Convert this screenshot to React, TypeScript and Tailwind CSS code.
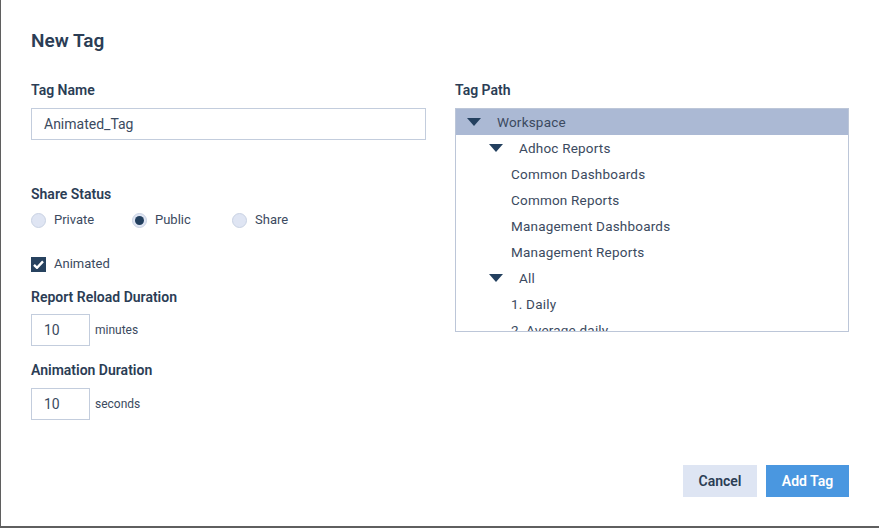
import React from 'react';

const font = { fontFamily: 'Roboto, "Noto Sans", sans-serif' };

const Caret: React.FC = () => (
  <svg width="14" height="8" viewBox="0 0 14 8" className="flex-shrink-0">
    <path d="M0 0h14L7 8z" fill="#23405f" />
  </svg>
);

const Radio: React.FC<{ label: string; checked?: boolean; width: string }> = ({ label, checked, width }) => (
  <label className={`flex items-center ${width}`}>
    <span className="w-[15px] h-[15px] rounded-full border border-[#c9d2e3] bg-[#dfe5f3] flex items-center justify-center">
      {checked && <span className="w-[9px] h-[9px] rounded-full bg-[#23405f]" />}
    </span>
    <span className="ml-2 text-[13px] text-[#3b4a60]">{label}</span>
  </label>
);

const treeRows: { label: string; indent: string; caret?: boolean }[] = [
  { label: 'Adhoc Reports', indent: 'pl-[33px]', caret: true },
  { label: 'Common Dashboards', indent: 'pl-[55px]' },
  { label: 'Common Reports', indent: 'pl-[55px]' },
  { label: 'Management Dashboards', indent: 'pl-[55px]' },
  { label: 'Management Reports', indent: 'pl-[55px]' },
  { label: 'All', indent: 'pl-[33px]', caret: true },
  { label: '1. Daily', indent: 'pl-[55px]' },
  { label: '2. Average daily', indent: 'pl-[55px]' },
];

export default function App() {
  return (
    <div className="w-[879px] h-[528px] bg-[#5f5f5f] overflow-hidden" style={font}>
      <div className="ml-px w-[878px] h-[526px] bg-white flex flex-col px-[30px] text-[#2b3d55]">
        <h1 className="mt-[30px] text-[19px] font-semibold leading-[22px] text-[#2b3d55]">New Tag</h1>

        <div className="mt-[30px] flex">
          {/* left column */}
          <div className="w-[395px] flex flex-col">
            <div className="text-[14px] font-semibold leading-[16px]">Tag Name</div>
            <div className="mt-[10px] h-[32px] border border-[#c3cddd] flex items-center px-[12px] text-[14px] text-[#3b4a60]">
              Animated_Tag
            </div>

            <div className="mt-[46px] text-[14px] font-semibold leading-[16px]">Share Status</div>
            <div className="mt-[10px] flex h-[16px]">
              <Radio label="Private" width="w-[101px]" />
              <Radio label="Public" checked width="w-[100px]" />
              <Radio label="Share" width="w-[100px]" />
            </div>

            <label className="mt-[28px] flex items-center h-[16px]">
              <span className="w-[15px] h-[15px] bg-[#27425f] flex items-center justify-center">
                <svg width="11" height="9" viewBox="0 0 11 9">
                  <path d="M1 4.8l3 3L10 1.4" fill="none" stroke="white" strokeWidth="2.4" />
                </svg>
              </span>
              <span className="ml-2 text-[13px] text-[#3b4a60]">Animated</span>
            </label>

            <div className="mt-[17px] text-[14px] font-semibold leading-[16px]">Report Reload Duration</div>
            <div className="mt-[9px] flex items-center">
              <div className="w-[59px] h-[32px] border border-[#c3cddd] flex items-center px-[12px] text-[14px] text-[#3b4a60]">10</div>
              <span className="ml-[5px] text-[12px] text-[#3b4a60]">minutes</span>
            </div>

            <div className="mt-[16px] text-[14px] font-semibold leading-[16px]">Animation Duration</div>
            <div className="mt-[10px] flex items-center">
              <div className="w-[59px] h-[32px] border border-[#c3cddd] flex items-center px-[12px] text-[14px] text-[#3b4a60]">10</div>
              <span className="ml-[5px] text-[12px] text-[#3b4a60]">seconds</span>
            </div>
          </div>

          {/* right column */}
          <div className="ml-[29px] w-[394px] flex flex-col">
            <div className="text-[14px] font-semibold leading-[16px]">Tag Path</div>
            <div className="mt-[10px] h-[224px] border border-[#bcc6d8] overflow-hidden">
              <div className="h-[26px] bg-[#abb9d4] flex items-center pl-[11px]">
                <Caret />
                <span className="ml-[16px] text-[13.5px] tracking-[0.2px] text-[#3b4a60]">Workspace</span>
              </div>
              {treeRows.map((r) => (
                <div key={r.label} className={`h-[26px] flex items-center ${r.indent}`}>
                  {r.caret && <Caret />}
                  <span className={`${r.caret ? 'ml-[16px]' : ''} text-[13.5px] tracking-[0.2px] text-[#3b4a60]`}>{r.label}</span>
                </div>
              ))}
            </div>
          </div>
        </div>

        <div className="mt-auto mb-[29px] flex justify-end gap-[9px]">
          <button className="w-[74px] h-[32px] bg-[#dee5f3] text-[14px] font-semibold text-[#2b3d55]">Cancel</button>
          <button className="w-[83px] h-[32px] bg-[#4a97e0] text-[14px] font-semibold text-white">Add Tag</button>
        </div>
      </div>
    </div>
  );
}
